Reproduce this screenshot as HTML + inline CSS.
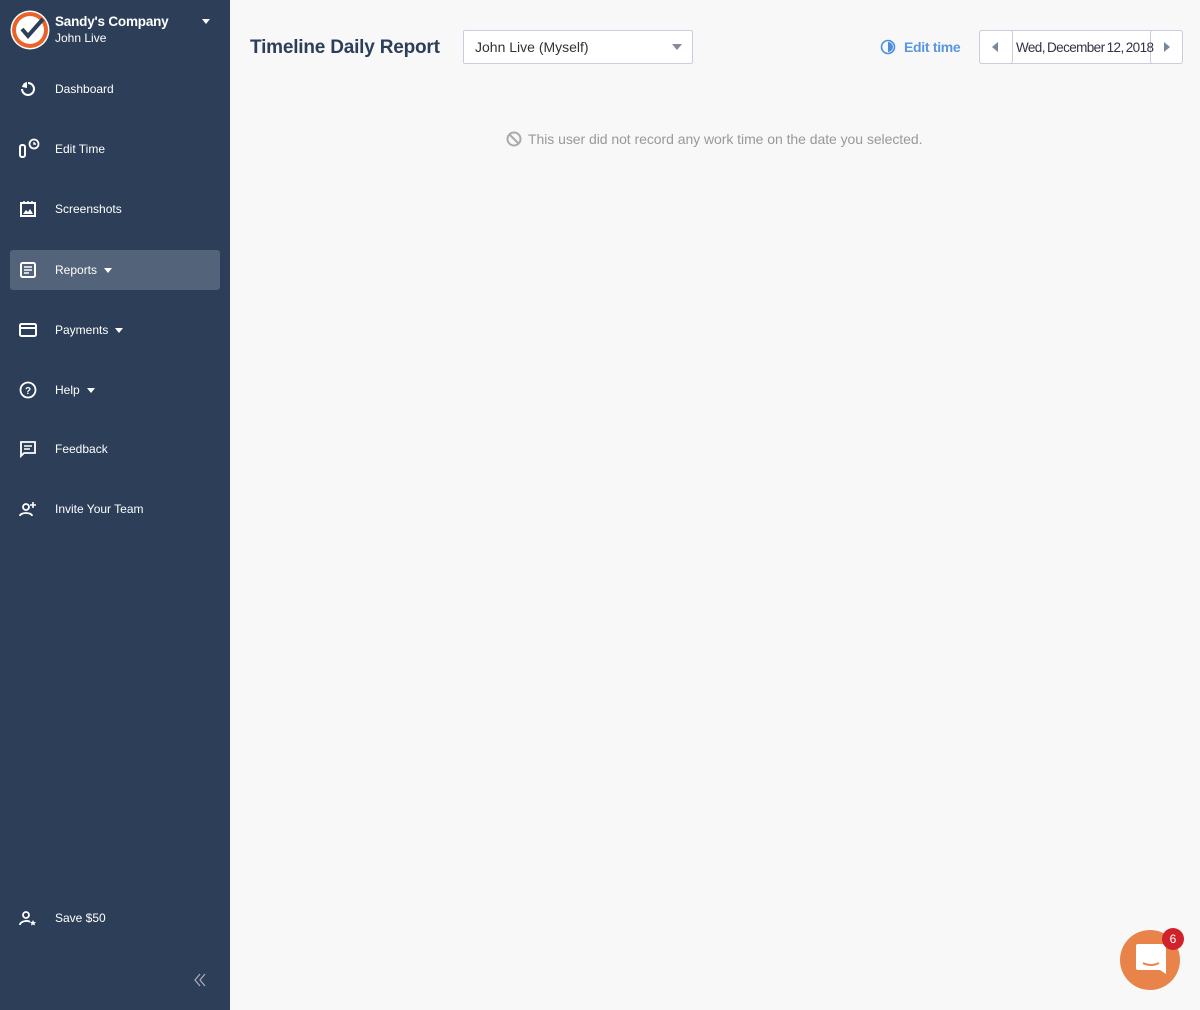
<!DOCTYPE html>
<html><head><style>
*{margin:0;padding:0;box-sizing:border-box}
body{width:1200px;height:1010px;background:#f8f8f8;font-family:"Liberation Sans",sans-serif;position:relative;overflow:hidden}
.sb{position:absolute;left:0;top:0;width:230px;height:1010px;background:#2c3e58;color:#fff}
.item{position:absolute;left:10px;width:210px;height:40px;font-size:12px;display:flex;align-items:center}
.item svg{position:absolute;left:9px}
.item span{position:absolute;left:45px}
.tri{display:inline-block;border-left:4px solid transparent;border-right:4px solid transparent;border-top:5px solid #fff;margin-left:7px;vertical-align:middle}
.act{background:#536379;border-radius:3px}
</style></head><body>
<div class="sb">
<svg style="position:absolute;left:10px;top:10px" width="40" height="40" viewBox="0 0 40 40"><circle cx="20" cy="20" r="19.5" fill="#fff"/><circle cx="20" cy="20" r="18" fill="#e8622a"/><circle cx="20" cy="20" r="14" fill="#fff"/><path d="M12 19 L18 26 L33 9" stroke="#2c3e58" stroke-width="4" fill="none"/></svg>
<div style="position:absolute;left:55px;top:14px;font-size:13.5px;font-weight:bold;letter-spacing:-0.2px">Sandy's Company</div>
<div style="position:absolute;left:55px;top:31px;font-size:12px">John Live</div>
<div class="tri" style="position:absolute;left:202px;top:19px;margin:0"></div>
<div class="item" style="top:69px"><svg width="18" height="18" viewBox="0 0 18 18"><path d="M9 3a6 6 0 1 1-6 6" stroke="#fff" stroke-width="2" fill="none"/><path d="M3 7A6 6 0 0 1 8 2V8z" fill="#fff"/></svg><span>Dashboard</span></div>
<div class="item" style="top:129px"><svg width="22" height="22" viewBox="0 0 22 22"><rect x="1" y="7" width="5" height="12" rx="2" stroke="#fff" stroke-width="2" fill="none"/><circle cx="15" cy="6" r="4.5" stroke="#fff" stroke-width="1.8" fill="none"/><path d="M15 4v2h2" stroke="#fff" stroke-width="1.5" fill="none"/></svg><span>Edit Time</span></div>
<div class="item" style="top:189px"><svg width="18" height="18" viewBox="0 0 18 18"><rect x="2" y="3" width="14" height="13" stroke="#fff" stroke-width="2" fill="none"/><path d="M4 14l3-4 2 2 2-3 3 5z" fill="#fff"/><path d="M5 1v3M9 1v3M13 1v3" stroke="#fff" stroke-width="1.5"/></svg><span>Screenshots</span></div>
<div class="item act" style="top:250px"><svg width="18" height="18" viewBox="0 0 18 18"><rect x="2" y="2" width="14" height="14" rx="1.5" stroke="#fff" stroke-width="2" fill="none"/><path d="M5 6h8M5 9h8M5 12h5" stroke="#fff" stroke-width="1.6"/></svg><span>Reports<i class="tri"></i></span></div>
<div class="item" style="top:310px"><svg width="18" height="18" viewBox="0 0 18 18"><rect x="1" y="3" width="16" height="12" rx="1.5" stroke="#fff" stroke-width="2" fill="none"/><path d="M1 7h16" stroke="#fff" stroke-width="2"/></svg><span>Payments<i class="tri"></i></span></div>
<div class="item" style="top:370px"><svg width="18" height="18" viewBox="0 0 18 18"><circle cx="9" cy="9" r="7.5" stroke="#fff" stroke-width="1.8" fill="none"/><text x="9" y="13" font-size="10" font-weight="bold" fill="#fff" text-anchor="middle" font-family="Liberation Sans">?</text></svg><span>Help<i class="tri"></i></span></div>
<div class="item" style="top:429px"><svg width="18" height="18" viewBox="0 0 18 18"><path d="M2 2h14v11H5l-3 3z" stroke="#fff" stroke-width="1.8" fill="none"/><path d="M5 6h8M5 9h6" stroke="#fff" stroke-width="1.5"/></svg><span>Feedback</span></div>
<div class="item" style="top:489px"><svg width="18" height="18" viewBox="0 0 18 18"><circle cx="7" cy="7" r="3" stroke="#fff" stroke-width="1.8" fill="none"/><path d="M1 16c0-4 12-4 12 0" stroke="#fff" stroke-width="1.8" fill="none"/><path d="M14 2v6M11 5h6" stroke="#fff" stroke-width="1.6"/></svg><span>Invite Your Team</span></div>
<div class="item" style="top:898px"><svg width="18" height="18" viewBox="0 0 18 18"><circle cx="7" cy="6" r="3" stroke="#fff" stroke-width="1.8" fill="none"/><path d="M1 16c0-4 8-5 10-3" stroke="#fff" stroke-width="1.8" fill="none"/><path d="M14 11l1 2h2l-1.5 1.5.5 2-2-1-2 1 .5-2L11 13h2z" fill="#fff"/></svg><span>Save $50</span></div>
<svg style="position:absolute;left:193px;top:973px" width="14" height="14" viewBox="0 0 14 14"><path d="M7 1L2 7l5 6M12 1L7 7l5 6" stroke="#aab" stroke-width="1.3" fill="none"/></svg>
</div>
<div style="position:absolute;left:250px;top:37px;font-size:19px;font-weight:bold;color:#2c3e58;letter-spacing:-0.2px">Timeline Daily Report</div>
<div style="position:absolute;left:463px;top:30px;width:230px;height:34px;background:#fff;border:1px solid #ccd;border-radius:2px;font-size:14px;color:#333;padding:8px 11px">John Live (Myself)<span style="position:absolute;right:10px;top:13px;border-left:5px solid transparent;border-right:5px solid transparent;border-top:6px solid #889"></span></div>
<svg style="position:absolute;left:880px;top:39px" width="16" height="16" viewBox="0 0 16 16"><circle cx="8" cy="8" r="6.5" stroke="#4a8ee0" stroke-width="1.6" fill="none"/><path d="M8 3a5 5 0 0 1 0 10z" fill="#4a8ee0"/></svg>
<div style="position:absolute;left:904px;top:39px;font-size:14px;font-weight:bold;color:#5a95e0;letter-spacing:-0.3px">Edit time</div>
<div style="position:absolute;left:979px;top:30px;width:204px;height:34px;background:#fff;border:1px solid #ccd;border-radius:3px"></div>
<div style="position:absolute;left:979px;top:30px;width:34px;height:34px;border:1px solid #ccd;border-radius:3px;background:#fff"><span style="position:absolute;left:12px;top:11px;border-top:5px solid transparent;border-bottom:5px solid transparent;border-right:6px solid #789"></span></div>
<div style="position:absolute;left:1150px;top:30px;width:33px;height:34px;border:1px solid #ccd;border-radius:3px;background:#fff"><span style="position:absolute;left:13px;top:11px;border-top:5px solid transparent;border-bottom:5px solid transparent;border-left:6px solid #789"></span></div>
<div style="position:absolute;left:1016px;top:40px;font-size:13.5px;color:#334;letter-spacing:-0.6px;word-spacing:-1px;white-space:nowrap">Wed, December 12, 2018</div>
<svg style="position:absolute;left:506px;top:131px" width="16" height="16" viewBox="0 0 16 16"><circle cx="8" cy="8" r="6.5" stroke="#aaa" stroke-width="2" fill="none"/><path d="M3.5 3.5l9 9" stroke="#aaa" stroke-width="2"/></svg>
<div style="position:absolute;left:528px;top:131px;font-size:14px;color:#999;letter-spacing:-0.05px">This user did not record any work time on the date you selected.</div>
<div style="position:absolute;left:1120px;top:930px;width:60px;height:60px;border-radius:50%;background:#e8834a"></div>
<svg style="position:absolute;left:1136px;top:944px" width="30" height="32" viewBox="0 0 30 32"><path d="M2 0h26a2 2 0 0 1 2 2v28l-6-4H2a2 2 0 0 1-2-2V2a2 2 0 0 1 2-2z" fill="#fff"/><path d="M7 19q8 4 16 0" stroke="#e8834a" stroke-width="2" fill="none"/></svg>
<div style="position:absolute;left:1162px;top:928px;width:22px;height:22px;border-radius:50%;background:#d0222a;color:#fff;font-size:12px;text-align:center;line-height:22px">6</div>
</body></html>
